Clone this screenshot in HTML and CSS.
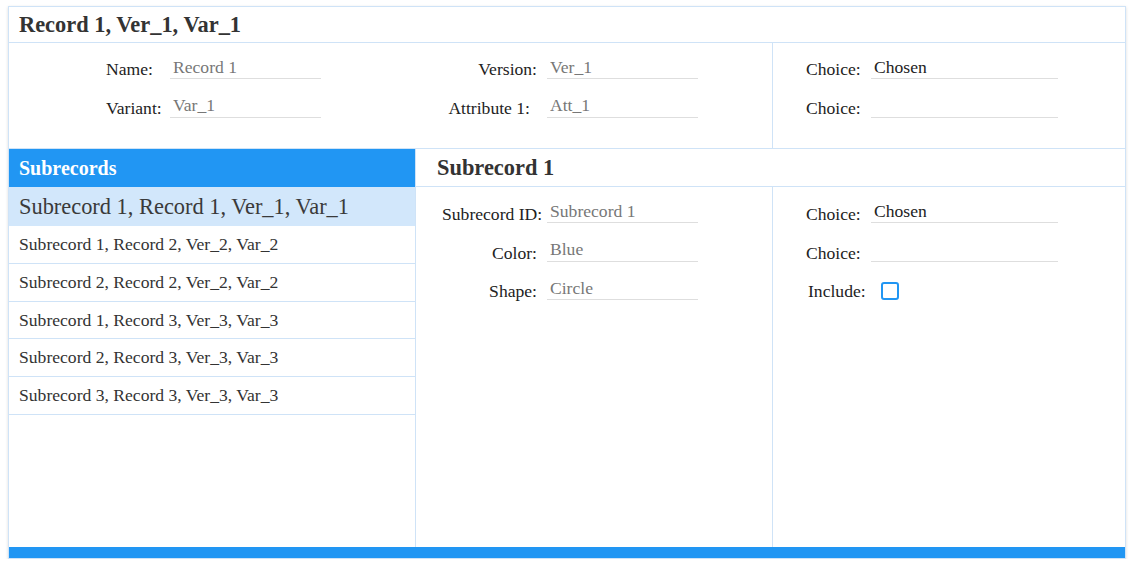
FILE: index.html
```html
<!DOCTYPE html>
<html lang="en">
<head>
<meta charset="utf-8">
<title>Record 1</title>
<link rel="stylesheet" href="styles.css">
</head>
<body>
<div class="app">
  <header class="app-header">
    <h1 class="app-title">Record 1, Ver_1, Var_1</h1>
  </header>

  <section class="record-form">
    <div class="col col-a">
      <div class="field"><label class="lbl">Name:</label><input class="input" value="Record 1" readonly></div>
      <div class="field"><label class="lbl">Variant:</label><input class="input" value="Var_1" readonly></div>
    </div>
    <div class="col col-b">
      <div class="field"><label class="lbl">Version:</label><input class="input" value="Ver_1" readonly></div>
      <div class="field"><label class="lbl lbl-shift">Attribute 1:</label><input class="input" value="Att_1" readonly></div>
    </div>
    <div class="col col-c">
      <div class="field"><label class="lbl">Choice:</label><input class="input input-wide input-value" value="Chosen" readonly></div>
      <div class="field"><label class="lbl">Choice:</label><input class="input input-wide" value="" readonly></div>
    </div>
  </section>

  <section class="main">
    <aside class="sub-list">
      <div class="list-head">Subrecords</div>
      <ul class="list">
        <li class="list-item selected">Subrecord 1, Record 1, Ver_1, Var_1</li>
        <li class="list-item">Subrecord 1, Record 2, Ver_2, Var_2</li>
        <li class="list-item">Subrecord 2, Record 2, Ver_2, Var_2</li>
        <li class="list-item">Subrecord 1, Record 3, Ver_3, Var_3</li>
        <li class="list-item">Subrecord 2, Record 3, Ver_3, Var_3</li>
        <li class="list-item">Subrecord 3, Record 3, Ver_3, Var_3</li>
      </ul>
    </aside>
    <div class="detail">
      <div class="detail-head"><h2 class="detail-title">Subrecord 1</h2></div>
      <div class="detail-body">
        <div class="col col-b col-b2">
          <div class="field"><label class="lbl">Subrecord ID:</label><input class="input" value="Subrecord 1" readonly></div>
          <div class="field"><label class="lbl">Color:</label><input class="input" value="Blue" readonly></div>
          <div class="field"><label class="lbl">Shape:</label><input class="input" value="Circle" readonly></div>
        </div>
        <div class="col col-c">
          <div class="field"><label class="lbl">Choice:</label><input class="input input-wide input-value" value="Chosen" readonly></div>
          <div class="field"><label class="lbl">Choice:</label><input class="input input-wide" value="" readonly></div>
          <div class="field"><label class="lbl lbl-include">Include:</label><input class="check" type="checkbox"></div>
        </div>
      </div>
    </div>
  </section>

  <div class="footer-bar"></div>
</div>
</body>
</html>
```

FILE: styles.css
```css
* { box-sizing: border-box; }

body {
  margin: 0;
  background: #fff;
  color: #222;
  font-family: "Liberation Serif", "Times New Roman", serif;
  font-size: 17.6px;
}

.app {
  margin: 6px 0 0 8px;
  width: 1118px;
  height: 553px;
  border: 1px solid #cfe3f7;
  box-shadow: 0 1px 3px rgba(0, 0, 0, 0.14);
  display: flex;
  flex-direction: column;
  background: #fff;
}

.app-header {
  flex: none;
  height: 36px;
  padding-left: 10px;
  border-bottom: 1px solid #cfe3f7;
}

.app-title {
  margin: 0;
  font-size: 22.4px;
  line-height: 35px;
  font-weight: bold;
  color: #333;
}

.record-form {
  flex: none;
  height: 106px;
  display: grid;
  grid-template-columns: 406px 358px 1fr;
  border-bottom: 1px solid #cfe3f7;
}

.col {
  display: flex;
  flex-direction: column;
  gap: 2.5px;
}

.record-form .col { padding-top: 0; }
.record-form .lbl { margin-bottom: 0; }

.field {
  display: flex;
  align-items: flex-end;
  height: 36px;
}

.lbl {
  line-height: 20px;
  margin-bottom: -1px;
  white-space: nowrap;
  flex: none;
}

.col-a { padding-left: 97px; }
.col-a .lbl { width: 64px; }

.col-b {
  border-right: 1px solid #cfe3f7;
  padding-left: 27px;
}
.col-b .lbl {
  width: 95px;
  margin-right: 10px;
  text-align: right;
}
.col-b .lbl-shift { padding-right: 7px; }
.col-b2 { padding-left: 26px; }

.col-c { padding-left: 33px; }
.col-c .lbl { width: 65px; }
.col-c .lbl-include { padding-left: 2px; }

.input {
  width: 151px;
  height: 21px;
  padding: 0 3px 2px;
  margin: 0;
  border: none;
  border-bottom: 1px solid #dedede;
  border-radius: 0;
  background: transparent;
  font-family: inherit;
  font-size: 17.6px;
  color: #777;
  outline: none;
}

.input-wide { width: 187px; }
.input-value { color: #222; }

.check {
  appearance: none;
  -webkit-appearance: none;
  width: 18px;
  height: 18px;
  margin: 0 0 0 10px;
  border: 2px solid #2196f3;
  border-radius: 3px;
  background: #fff;
}

.main {
  flex: 1;
  display: grid;
  grid-template-columns: 406px 1fr;
  min-height: 0;
}

.list-head {
  height: 38px;
  padding-left: 10px;
  background: #2196f3;
  color: #fff;
  font-weight: bold;
  font-size: 20px;
  line-height: 38px;
}

.list {
  margin: 0;
  padding: 0;
  list-style: none;
}

.list-item {
  height: 37.8px;
  padding: 0 10px;
  border-bottom: 1px solid #cfe3f7;
  line-height: 36.8px;
  color: #333;
  white-space: nowrap;
}

.list-item.selected {
  height: 39px;
  line-height: 39px;
  font-size: 22.4px;
  background: #d2e7fb;
  border-bottom: none;
  color: #3a3a3a;
}

.detail {
  display: flex;
  flex-direction: column;
  border-left: 1px solid #cfe3f7;
}

.detail-head {
  flex: none;
  height: 38px;
  padding-left: 21px;
  border-bottom: 1px solid #cfe3f7;
}

.detail-title {
  margin: 0;
  font-size: 22.4px;
  line-height: 37px;
  font-weight: bold;
  color: #333;
}

.detail-body {
  flex: 1;
  display: grid;
  grid-template-columns: 357px 1fr;
}

.footer-bar {
  flex: none;
  height: 11px;
  background: #2196f3;
}
```
